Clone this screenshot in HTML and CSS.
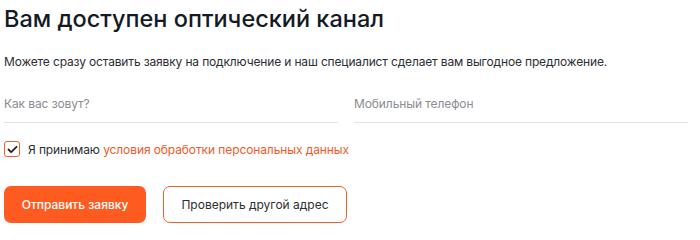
FILE: index.html
```html
<!DOCTYPE html>
<html lang="ru">
<head>
<meta charset="utf-8">
<link rel="stylesheet" href="styles.css">
</head>
<body>
<div class="form">
  <h1 class="title">Вам доступен оптический канал</h1>
  <p class="lead">Можете сразу оставить заявку на подключение и наш специалист сделает вам выгодное предложение.</p>
  <div class="fields">
    <div class="field"><span class="placeholder">Как вас зовут?</span></div>
    <div class="field"><span class="placeholder">Мобильный телефон</span></div>
  </div>
  <label class="agree">
    <span class="check">
      <svg width="11" height="9" viewBox="0 0 12 10"><path d="M1.5 5 L4.5 8 L10.5 2" fill="none" stroke="#222" stroke-width="2" stroke-linecap="round" stroke-linejoin="round"/></svg>
    </span>
    <span class="agree-text">Я принимаю <span class="link">условия обработки персональных данных</span></span>
  </label>
  <div class="buttons">
    <button class="btn btn-primary">Отправить заявку</button>
    <button class="btn btn-outline">Проверить другой адрес</button>
  </div>
</div>
</body>
</html>
```

FILE: styles.css
```css
* { box-sizing: border-box; }
html, body { margin: 0; padding: 0; background: #fff; }
body { font-family: Inter, "Noto Sans", sans-serif; color: #1f2229; }
.form { padding: 4px 12px 0 4px; }
.title { margin: 0; font-size: 23.5px; font-weight: 500; line-height: 30px; color: #151a24; letter-spacing: 0; }
.lead { margin: 19px 0 0; font-size: 12px; line-height: 18px; color: #2b2e35; letter-spacing: -0.15px; }
.fields { display: grid; grid-template-columns: 1fr 1fr; column-gap: 16px; margin-top: 21px; }
.field { height: 31px; border-bottom: 1.5px solid #e3e3e6; }
.placeholder { font-size: 12px; line-height: 18px; color: #8a8c92; letter-spacing: -0.1px; }
.agree { display: flex; align-items: center; gap: 8px; margin-top: 18px; font-size: 12px; color: #2b2e35; letter-spacing: -0.1px; }
.check { width: 16px; height: 16px; border: 1.5px solid #f2602a; border-radius: 3px; display: flex; align-items: center; justify-content: center; }
.link { color: #f05a28; }
.buttons { display: flex; gap: 17px; margin-top: 29px; }
.btn { height: 37px; border-radius: 7px; font-family: Inter, "Noto Sans", sans-serif; font-size: 12px; font-weight: 500; cursor: pointer; padding: 0; }
.btn-primary { width: 142px; background: #ff5a1f; border: none; color: #fff; }
.btn-outline { width: 184px; background: #fff; border: 1.5px solid #f2602a; color: #2b2e35; font-weight: 400; }
```
